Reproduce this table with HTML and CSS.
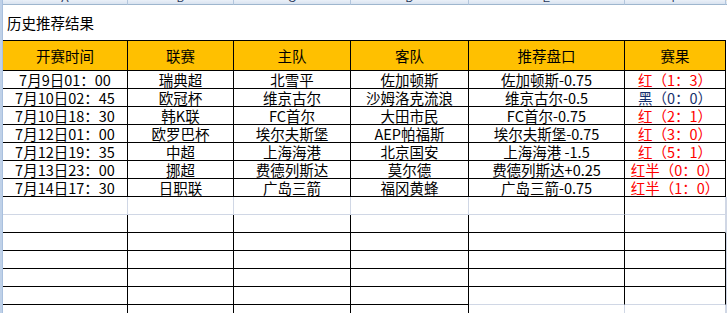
FILE: index.html
```html
<!DOCTYPE html>
<html lang="zh-CN">
<head>
<meta charset="utf-8">
<title>历史推荐结果</title>
<link rel="stylesheet" href="styles.css">
</head>
<body>
<div class="sheet">
  <div class="strip"></div>

  <div class="colhead"><span>A</span></div>
  <div class="colhead"><span>B</span></div>
  <div class="colhead"><span>C</span></div>
  <div class="colhead"><span>D</span></div>
  <div class="colhead"><span>E</span></div>
  <div class="colhead"><span>F</span></div>
  <div class="colhead last"><span>G</span></div>

  <div class="title">历史推荐结果</div>
  <div class="blank"></div>

  <div class="hd">开赛时间</div>
  <div class="hd">联赛</div>
  <div class="hd">主队</div>
  <div class="hd">客队</div>
  <div class="hd">推荐盘口</div>
  <div class="hd">赛果</div>
  <div class="blank"></div>

  <div class="td">7月9日01：00</div><div class="td">瑞典超</div><div class="td">北雪平</div><div class="td">佐加顿斯</div><div class="td">佐加顿斯-0.75</div><div class="td red">红（1：3）</div><div class="blank"></div>
  <div class="td">7月10日02：45</div><div class="td">欧冠杯</div><div class="td">维京古尔</div><div class="td">沙姆洛克流浪</div><div class="td">维京古尔-0.5</div><div class="td navy">黑（0：0）</div><div class="blank"></div>
  <div class="td">7月10日18：30</div><div class="td">韩K联</div><div class="td">FC首尔</div><div class="td">大田市民</div><div class="td">FC首尔-0.75</div><div class="td red">红（2：1）</div><div class="blank"></div>
  <div class="td">7月12日01：00</div><div class="td">欧罗巴杯</div><div class="td">埃尔夫斯堡</div><div class="td">AEP帕福斯</div><div class="td">埃尔夫斯堡-0.75</div><div class="td red">红（3：0）</div><div class="blank"></div>
  <div class="td">7月12日19：35</div><div class="td">中超</div><div class="td">上海海港</div><div class="td">北京国安</div><div class="td">上海海港 -1.5</div><div class="td red">红（5：1）</div><div class="blank"></div>
  <div class="td">7月13日23：00</div><div class="td">挪超</div><div class="td">费德列斯达</div><div class="td">莫尔德</div><div class="td">费德列斯达+0.25</div><div class="td red">红半（0：0）</div><div class="blank"></div>
  <div class="td">7月14日17：30</div><div class="td">日职联</div><div class="td">广岛三箭</div><div class="td">福冈黄蜂</div><div class="td">广岛三箭-0.75</div><div class="td red">红半（1：0）</div><div class="blank"></div>

  <!-- empty row 0 -->
  <div class="e"></div><div class="e"></div><div class="e"></div><div class="e"></div><div class="e rk"></div><div class="e"></div><div class="e"></div>
  <!-- empty row 1 -->
  <div class="e rk bk"></div><div class="e rk bk"></div><div class="e rk bk"></div><div class="e rk bk"></div><div class="e rk bk"></div><div class="e bk"></div><div class="e"></div>
  <!-- empty rows 2-4 -->
  <div class="e rk bk"></div><div class="e rk bk"></div><div class="e rk bk"></div><div class="e rk bk"></div><div class="e rk bk"></div><div class="e rk bk"></div><div class="e"></div>
  <div class="e rk bk"></div><div class="e rk bk"></div><div class="e rk bk"></div><div class="e rk bk"></div><div class="e rk bk"></div><div class="e rk bk"></div><div class="e"></div>
  <div class="e rk bk"></div><div class="e rk bk"></div><div class="e rk bk"></div><div class="e rk bk"></div><div class="e rk bk"></div><div class="e rk bk"></div><div class="e"></div>
  <!-- empty row 5 -->
  <div class="e rk bk"></div><div class="e rk bk"></div><div class="e rk bk"></div><div class="e rk bk"></div><div class="e rk"></div><div class="e rk"></div><div class="e"></div>
  <!-- empty row 6 -->
  <div class="e rk"></div><div class="e rk"></div><div class="e rk"></div><div class="e rk"></div><div class="e"></div><div class="e"></div><div class="e"></div>
</div>
</body>
</html>
```

FILE: styles.css
```css
html, body {
  margin: 0;
  padding: 0;
  background: #ffffff;
  overflow: hidden;
}

.sheet {
  display: grid;
  grid-template-columns: 3px 125px 106px 117px 118px 156px 101px 1fr;
  grid-template-rows: 5px 36px 30px repeat(7, 18px) repeat(7, 18px);
  width: 727px;
  font-family: "Noto Sans CJK SC", "Noto Sans", sans-serif;
  font-size: 14.5px;
  color: #000;
}

.sheet > div {
  box-sizing: border-box;
  min-width: 0;
}

.strip {
  grid-column: 1;
  grid-row: 1 / -1;
  background: #bfd1e8;
  border-right: 1px solid #a9c0de;
}

.colhead {
  background: linear-gradient(#eaf0f8, #d9e3f0);
  border-right: 1px solid #b3c6dd;
  border-bottom: 1px solid #9eb6ce;
  overflow: hidden;
  text-align: center;
  font-family: "Liberation Sans", Arial, sans-serif;
  font-size: 11px;
  line-height: 11px;
  color: #27375a;
}
.colhead span {
  display: block;
  margin-top: -7px;
}
.colhead.last {
  border-right: none;
}

.title {
  grid-column: 2 / 8;
  border-bottom: 1px solid #000;
  padding-left: 4px;
  display: flex;
  align-items: center;
  line-height: 20px;
  white-space: nowrap;
}

.blank {
  background: #fff;
}

.hd {
  background: #ffc000;
  border-right: 1px solid #000;
  border-bottom: 1px solid #000;
  display: flex;
  align-items: center;
  justify-content: center;
  line-height: 20px;
  padding-top: 1px;
  white-space: nowrap;
}

.td {
  border-right: 1px solid #000;
  border-bottom: 1px solid #000;
  display: flex;
  align-items: center;
  justify-content: center;
  line-height: 16px;
  padding-top: 1px;
  white-space: nowrap;
}

.red {
  color: #ff0000;
}
.navy {
  color: #17306e;
}

.e {
  border-right: 1px solid #d0d7e5;
  border-bottom: 1px solid #d0d7e5;
}
.e.rk {
  border-right-color: #000;
}
.e.bk {
  border-bottom-color: #000;
}
```
